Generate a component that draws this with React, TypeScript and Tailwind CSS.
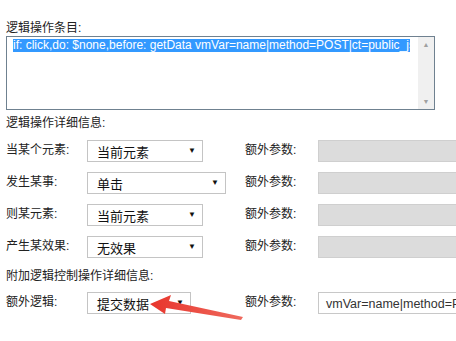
import React from 'react';

const labelCls = "w-[81px] shrink-0 text-[12px] leading-[14px] text-[#222] pt-[3px]";
const label2Cls = "w-[73px] shrink-0 text-[12px] leading-[14px] text-[#222] pt-[3px]";

const Select: React.FC<{ value: string; width: string }> = ({ value, width }) => (
    <div className={`${width} h-[22px] shrink-0 border border-[#c4c4c4] bg-white flex items-center justify-between pl-[9px] pr-[6px]`}>
        <span className="text-[13px] leading-none text-[#111] pt-[3px]">{value}</span>
        <span className="text-[8px] leading-none text-[#111]">▼</span>
    </div>
);

const Row: React.FC<{ label: string; value: string; width: string; extra?: string }> = ({ label, value, width, extra }) => (
    <div className="flex items-start h-[22px]">
        <div className={labelCls}>{label}</div>
        <div className="w-[158px] shrink-0">
            <Select value={value} width={width} />
        </div>
        <div className={label2Cls}>额外参数:</div>
        {extra !== undefined ? (
            <div className="w-[160px] h-[22px] shrink-0 border border-[#c8c8c8] bg-white text-[12.5px] leading-none text-[#333] pl-[7px] pt-[5px] whitespace-nowrap overflow-hidden">{extra}</div>
        ) : (
            <div className="w-[160px] h-[22px] shrink-0 border border-[#cfcfcf] bg-[#dcdcdc]" />
        )}
    </div>
);

export default function App() {
    return (
        <div className="relative w-[456px] h-[341px] overflow-hidden bg-white pl-[6px]" style={{ fontFamily: '"Liberation Sans", "Noto Sans CJK SC", Arial, sans-serif' }}>
            <div className="pt-[21px] text-[12px] leading-[14px] text-[#222]">逻辑操作条目:</div>
            <div className="mt-[1px] w-[429px] h-[74px] border border-[#6f8190] bg-white flex">
                <div className="flex-1 overflow-hidden pl-[6px] pt-[2px]">
                    <div className="whitespace-nowrap text-[12px] leading-[13px] w-[397px] overflow-hidden">
                        <span className="bg-[#3399ff] text-white">if: click,do: $none,before: getData vmVar=name|method=POST|ct=public_js</span>
                    </div>
                </div>
                <div className="w-[16px] bg-[#f0f0f0] flex flex-col items-center justify-between py-[4px]">
                    <span className="text-[7px] leading-none text-[#a0a0a0]">▲</span>
                    <span className="text-[7px] leading-none text-[#a0a0a0]">▼</span>
                </div>
            </div>
            <div className="mt-[6px] text-[12px] leading-[14px] text-[#222]">逻辑操作详细信息:</div>
            <div className="mt-[10px] flex flex-col gap-[10px]">
                <Row label="当某个元素:" value="当前元素" width="w-[116px]" />
                <Row label="发生某事:" value="单击" width="w-[139px]" />
                <Row label="则某元素:" value="当前元素" width="w-[116px]" />
                <Row label="产生某效果:" value="无效果" width="w-[116px]" />
            </div>
            <div className="mt-[11px] text-[12px] leading-[14px] text-[#222]">附加逻辑控制操作详细信息:</div>
            <div className="mt-[9px]">
                <Row label="额外逻辑:" value="提交数据" width="w-[104px]" extra="vmVar=name|method=POST|ct=public_js" />
            </div>
            <svg className="absolute left-0 top-0" width="456" height="341" viewBox="0 0 456 341">
                <defs>
                    <linearGradient id="ar" x1="0" y1="0" x2="1" y2="0">
                        <stop offset="0" stopColor="#e8352c" />
                        <stop offset="1" stopColor="#ef6a5e" />
                    </linearGradient>
                </defs>
                <polygon points="150,304 171,295 169,301 243,317 241,320 166,308 165,314" fill="url(#ar)" />
            </svg>
        </div>
    );
}
